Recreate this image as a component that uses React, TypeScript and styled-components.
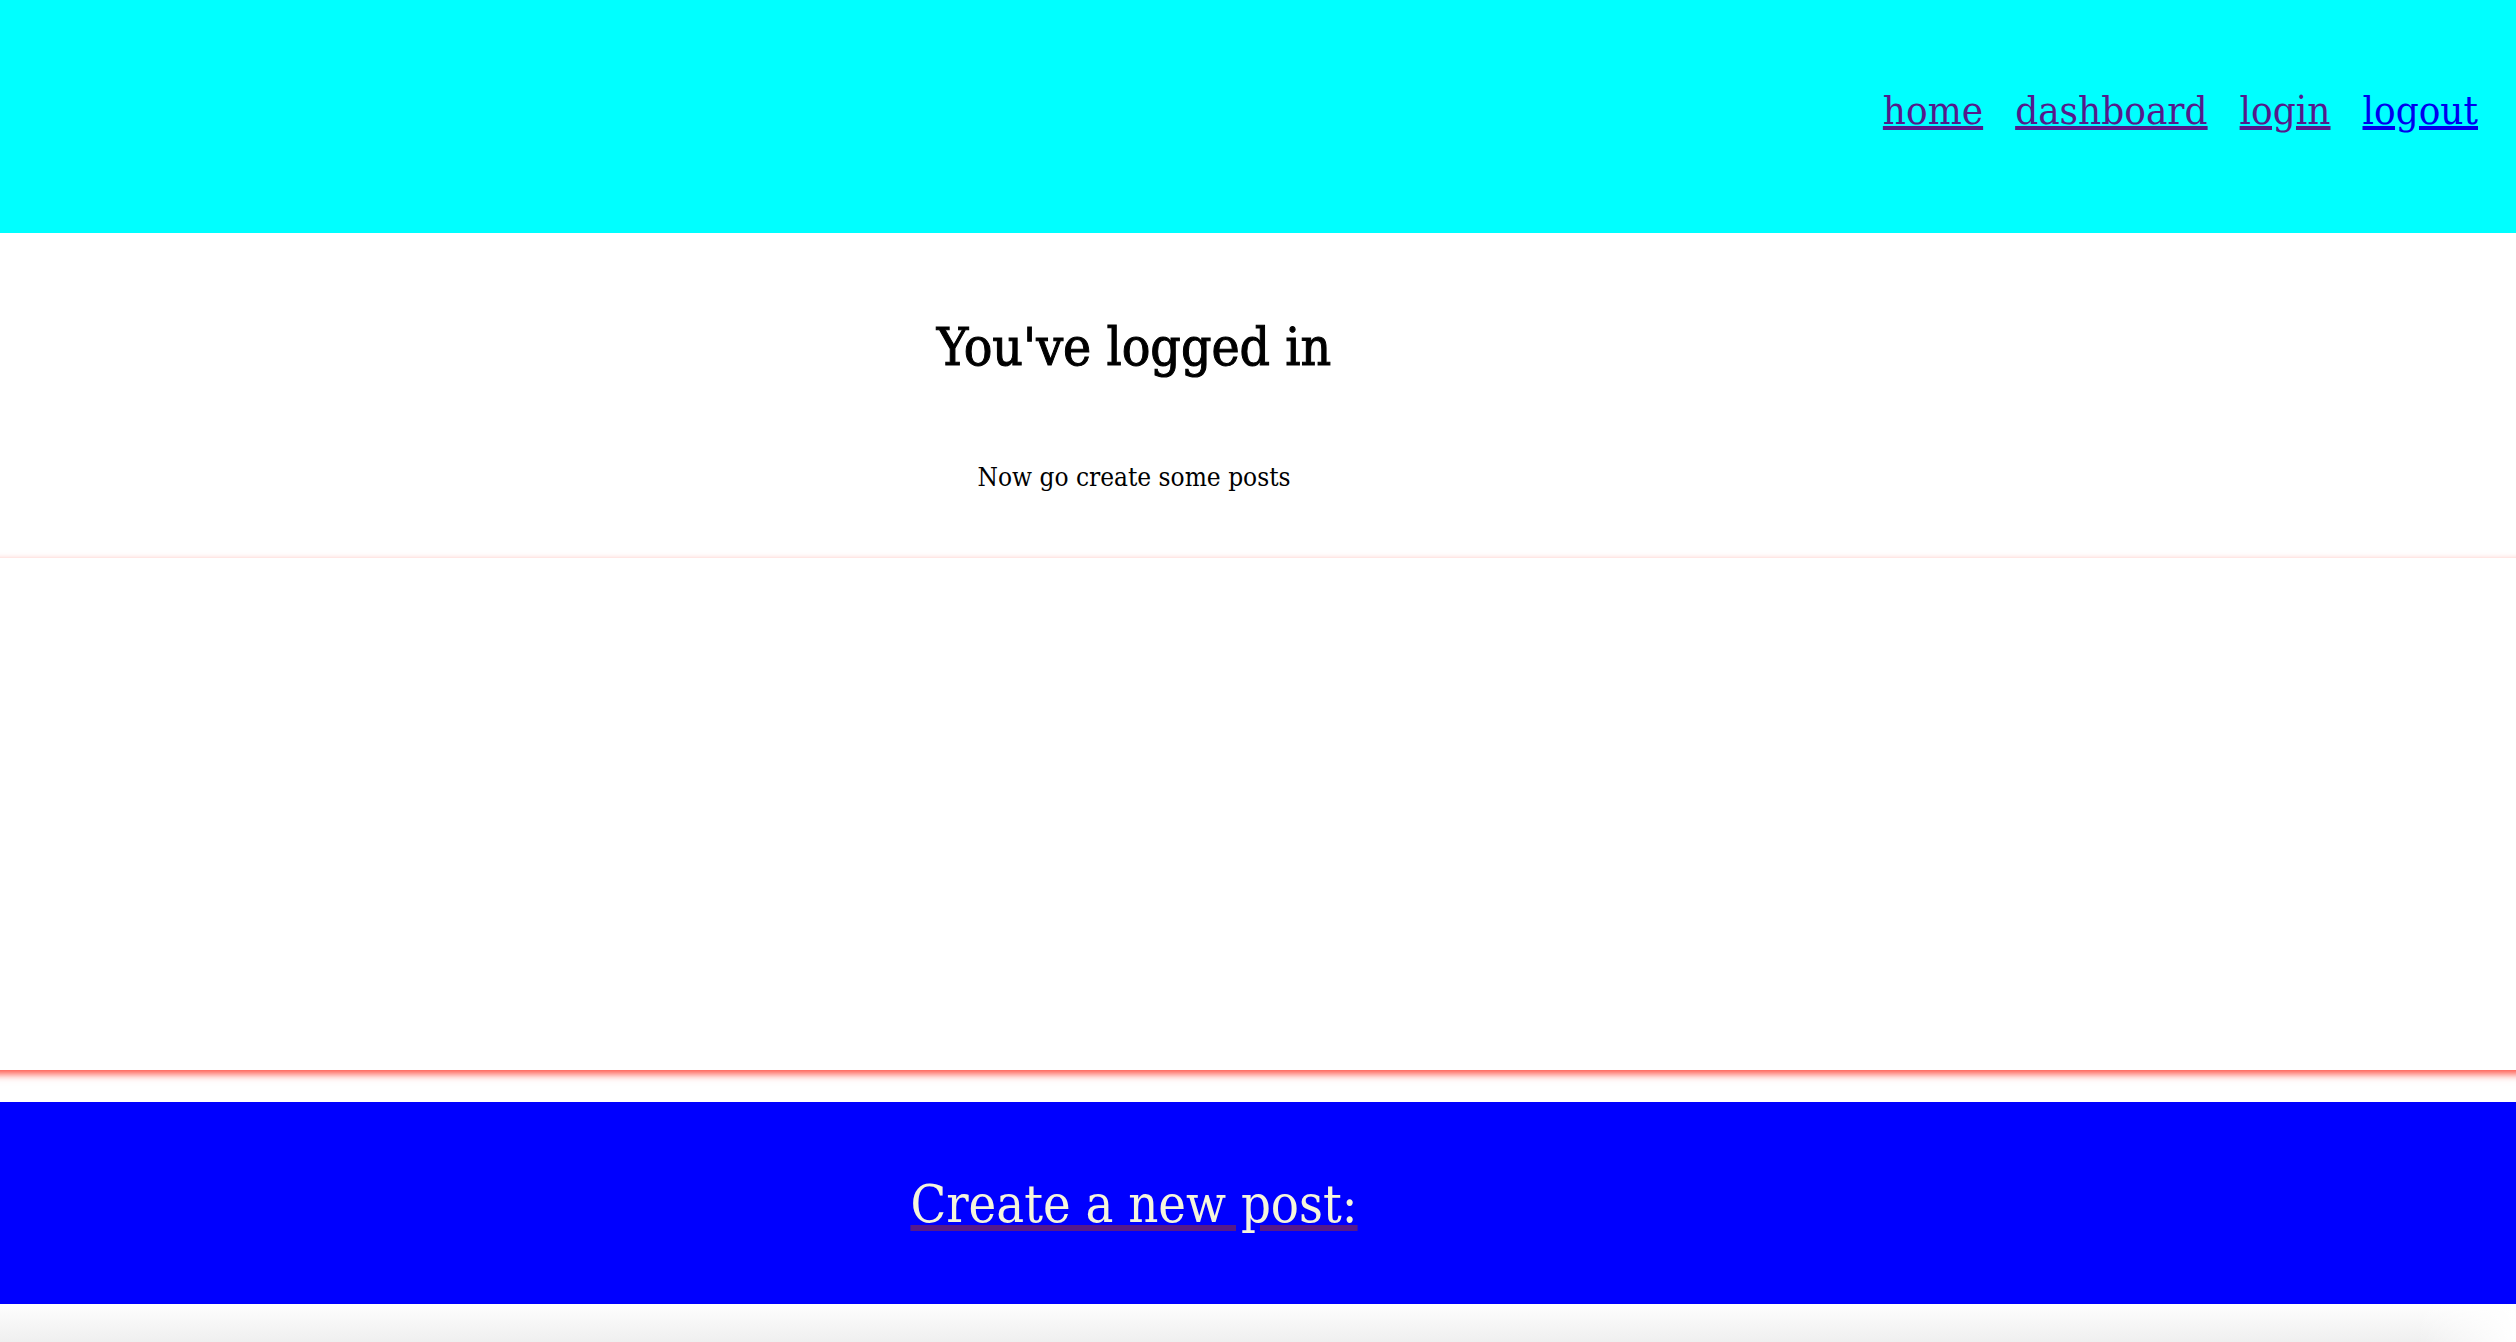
import React from "react";
import styled, { createGlobalStyle } from "styled-components";

const GlobalStyle = createGlobalStyle`
  * { box-sizing: border-box; }
  body {
    margin: 0;
    background: #fff;
    color: #000;
    font-family: "DejaVu Serif Condensed", "DejaVu Serif", "Liberation Serif", serif;
  }
`;

const Header = styled.header`
  display: flex;
  justify-content: flex-end;
  padding: 80px 38px 93px;
  background: aqua;
`;

const Nav = styled.nav`
  display: flex;
  gap: 32px;
  font-size: 40px;
  line-height: 60px;
`;

const NavLink = styled.a<{ $visited?: boolean }>`
  color: ${({ $visited }) => ($visited ? "#551a8b" : "#0000ee")};
  text-decoration: underline;
  text-decoration-thickness: 4px;
`;

const Intro = styled.section`
  padding: 74px 248px 51px 0;
  text-align: center;
`;

const Title = styled.h1`
  margin: 0 0 60px;
  font-size: 53px;
  font-weight: 400;
  line-height: 80px;
  -webkit-text-stroke: 1px currentColor;
`;

const Message = styled.p`
  margin: 0;
  font-size: 26px;
  line-height: 60px;
`;

const Main = styled.main`
  overflow: hidden;
`;

const Posts = styled.section`
  height: 512px;
  margin: 0 -16px;
  background: #fff;
  box-shadow: 0 4px 8px rgb(255, 80, 68);
`;

const CreateBar = styled.section`
  margin-top: 32px;
  padding: 62px 248px 60px 0;
  background: blue;
  text-align: center;
`;

const CreateLink = styled.a`
  color: #551a8b;
  font-size: 52px;
  line-height: 80px;
  text-decoration: underline;
  text-decoration-thickness: 6px;
`;

const CreateLabel = styled.span`
  color: beige;
`;

const Footer = styled.footer`
  height: 38px;
  background:
    linear-gradient(to right, transparent calc(100% - 100px), #fff),
    linear-gradient(#fefefe, #efefef);
`;

export default function App() {
  return (
    <>
      <GlobalStyle />
      <Header>
        <Nav>
          <NavLink href="#home" $visited>home</NavLink>
          <NavLink href="#dashboard" $visited>dashboard</NavLink>
          <NavLink href="#login" $visited>login</NavLink>
          <NavLink href="#logout">logout</NavLink>
        </Nav>
      </Header>
      <Main>
        <Intro>
          <Title>You've logged in</Title>
          <Message>Now go create some posts</Message>
        </Intro>
        <Posts />
        <CreateBar>
          <CreateLink href="#new"><CreateLabel>Create a new post:</CreateLabel></CreateLink>
        </CreateBar>
      </Main>
      <Footer />
    </>
  );
}
